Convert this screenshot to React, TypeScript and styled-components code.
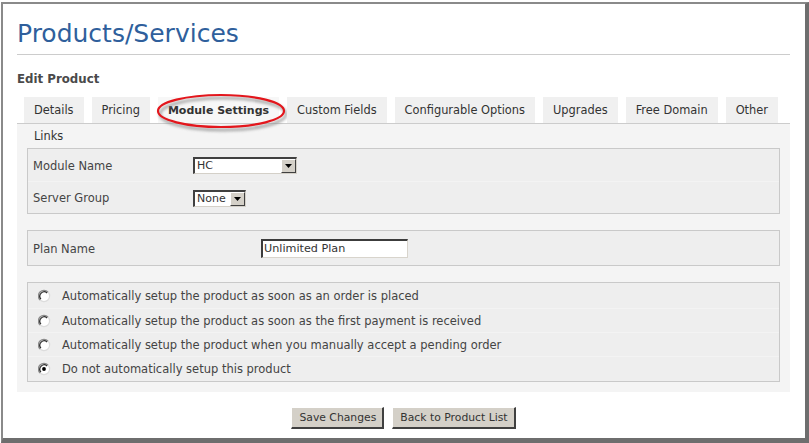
import React from "react";
import styled, { createGlobalStyle, css } from "styled-components";

const GlobalStyle = createGlobalStyle`
  html, body { margin: 0; padding: 0; background: #ffffff; }
  body { font-family: "DejaVu Sans", Verdana, sans-serif; }
  * { box-sizing: border-box; }
`;

const Frame = styled.div`
  margin: 2px 0 0 1px;
  width: 808px;
  height: 441px;
  border-style: solid;
  border-color: #8a8a8a #6e6e6e #6e6e6e #8a8a8a;
  border-width: 2px 4px 5px 2px;
  background: #ffffff;
  padding: 14px 15px 0 14px;
  display: flex;
  flex-direction: column;
`;

const Title = styled.h1`
  margin: 0;
  font-family: "DejaVu Sans", Verdana, sans-serif;
  font-weight: normal;
  font-size: 25px;
  line-height: 31px;
  color: #2f5f9c;
`;

const Rule = styled.hr`
  margin: 5px 0 0 0;
  border: 0;
  border-top: 1px solid #cccccc;
  height: 0;
`;

const SubHeading = styled.h2`
  margin: 16px 0 0 0;
  font-size: 11.8px;
  line-height: 16px;
  font-weight: bold;
  color: #4a4a4a;
`;

const TabRow = styled.div<{ $inner?: boolean }>`
  display: flex;
  gap: 8px;
  padding-left: 7px;
  ${(p) =>
    p.$inner
      ? css`
          height: 24px;
          margin-left: -10px;
        `
      : css`
          margin-top: 10px;
          border-bottom: 1px solid #cccccc;
        `}
`;

const Tab = styled.div<{ $active?: boolean; $plain?: boolean }>`
  position: relative;
  height: ${(p) => (p.$plain ? "24px" : "26px")};
  padding: 0 10px;
  display: flex;
  align-items: center;
  font-size: ${(p) => (p.$active ? "11px" : "11.4px")};
  color: #333333;
  white-space: nowrap;
  background: ${(p) => (p.$plain ? "transparent" : p.$active ? "#f7f7f7" : "#f0f0f0")};
  font-weight: ${(p) => (p.$active ? "bold" : "normal")};
`;

const Highlight = styled.svg`
  position: absolute;
  left: -6px;
  top: -7px;
  width: 140px;
  height: 44px;
  overflow: visible;
  pointer-events: none;
`;

const Panel = styled.div`
  background: #f4f4f4;
  padding: 0 10px 10px 10px;
  display: flex;
  flex-direction: column;
`;

const Box = styled.div<{ $gap: number; $pad?: number }>`
  margin-top: ${(p) => p.$gap}px;
  padding: ${(p) => p.$pad ?? 0}px 0;
  border: 1px solid #c9c9c9;
  background: #eeeeee;
  display: flex;
  flex-direction: column;
`;

const FieldRow = styled.div<{ $h?: number }>`
  height: ${(p) => p.$h ?? 32}px;
  display: flex;
  align-items: center;
  padding-top: 1px;
  & + & {
    border-top: 1px solid #f3f3f3;
  }
`;

const Label = styled.div<{ $width: number }>`
  width: ${(p) => p.$width}px;
  padding-left: 5px;
  font-size: 11.5px;
  color: #444444;
  flex-shrink: 0;
`;

const SelectBox = styled.div<{ $width: number }>`
  width: ${(p) => p.$width}px;
  height: 17px;
  display: flex;
  align-items: stretch;
  background: #ffffff;
  border-style: solid;
  border-width: 2px 1px 1px 2px;
  border-color: #404040 #d4d0c8 #d4d0c8 #404040;
`;

const SelectValue = styled.div`
  flex: 1;
  font-size: 11px;
  line-height: 14px;
  color: #333333;
  padding-left: 2px;
`;

const SelectButton = styled.div`
  width: 15px;
  background: #d4d0c8;
  border-style: solid;
  border-width: 1px;
  border-color: #ffffff #404040 #404040 #ffffff;
  display: flex;
  align-items: center;
  justify-content: center;
`;

const TextInput = styled.div`
  width: 147px;
  height: 19px;
  background: #ffffff;
  border-style: solid;
  border-width: 2px 1px 1px 2px;
  border-color: #3c3c3c #d8d4cc #d8d4cc #3c3c3c;
  font-size: 11.2px;
  line-height: 15px;
  color: #333333;
  padding-left: 1px;
`;

const RadioRow = styled.div`
  height: 24px;
  display: flex;
  align-items: center;
  padding-left: 10px;
  gap: 6px;
  font-size: 11.5px;
  color: #444444;
  & + & {
    border-top: 1px solid #f3f3f3;
  }
`;

const RadioIcon = styled.svg`
  width: 18px;
  height: 14px;
  flex-shrink: 0;
`;

const Actions = styled.div`
  display: flex;
  justify-content: center;
  gap: 8px;
  margin-top: 15px;
`;

const Button = styled.button`
  height: 22px;
  padding: 0 6px 0 7px;
  background: #d4d0c8;
  border-style: solid;
  border-width: 1px 2px 2px 1px;
  border-color: #ffffff #404040 #404040 #ffffff;
  font-family: "DejaVu Sans", Verdana, sans-serif;
  font-size: 10.8px;
  color: #333333;
  cursor: pointer;
`;

const tabs = [
  "Details",
  "Pricing",
  "Module Settings",
  "Custom Fields",
  "Configurable Options",
  "Upgrades",
  "Free Domain",
  "Other",
];

const Arrow = () => (
  <svg width="7" height="4" viewBox="0 0 7 4">
    <path d="M0 0h7L3.5 4z" fill="#000" />
  </svg>
);

const Select = ({ width, value }: { width: number; value: string }) => (
  <SelectBox $width={width}>
    <SelectValue>{value}</SelectValue>
    <SelectButton>
      <Arrow />
    </SelectButton>
  </SelectBox>
);

const Radio = ({ checked }: { checked?: boolean }) => (
  <RadioIcon viewBox="0 0 18 14">
    <circle cx="6" cy="7" r="5.6" fill="#ffffff" />
    <path d="M9.96 3.04 A5.6 5.6 0 0 1 2.04 10.96" stroke="#dcdcdc" strokeWidth="1.2" fill="none" />
    <path d="M2.04 10.96 A5.6 5.6 0 0 1 9.96 3.04" stroke="#8c8c8c" strokeWidth="1.4" fill="none" />
    <path d="M2.9 10.1 A4.4 4.4 0 0 1 9.1 3.9" stroke="#303030" strokeWidth="1.3" fill="none" />
    {checked && <circle cx="6" cy="7" r="1.9" fill="#000" />}
  </RadioIcon>
);

const radios = [
  "Automatically setup the product as soon as an order is placed",
  "Automatically setup the product as soon as the first payment is received",
  "Automatically setup the product when you manually accept a pending order",
  "Do not automatically setup this product",
];

export default function App() {
  return (
    <>
      <GlobalStyle />
      <Frame>
        <Title>Products/Services</Title>
        <Rule />
        <SubHeading>Edit Product</SubHeading>
        <TabRow>
          {tabs.map((t) => (
            <Tab key={t} $active={t === "Module Settings"}>
              {t}
              {t === "Module Settings" && (
                <Highlight viewBox="0 0 140 44">
                  <defs>
                    <filter id="blur" x="-20%" y="-40%" width="140%" height="180%">
                      <feGaussianBlur stdDeviation="1.4" />
                    </filter>
                  </defs>
                  <ellipse
                    cx="71"
                    cy="24"
                    rx="63"
                    ry="16"
                    fill="none"
                    stroke="#8a8a8a"
                    strokeWidth="2.5"
                    filter="url(#blur)"
                    opacity="0.8"
                  />
                  <ellipse cx="69" cy="21" rx="63" ry="16" fill="none" stroke="#e3161c" strokeWidth="2.2" />
                </Highlight>
              )}
            </Tab>
          ))}
        </TabRow>
        <Panel>
          <TabRow $inner>
            <Tab $plain>Links</Tab>
          </TabRow>
          <Box $gap={0}>
            <FieldRow>
              <Label $width={165}>Module Name</Label>
              <Select width={104} value="HC" />
            </FieldRow>
            <FieldRow>
              <Label $width={165}>Server Group</Label>
              <Select width={53} value="None" />
            </FieldRow>
          </Box>
          <Box $gap={16}>
            <FieldRow $h={34}>
              <Label $width={233}>Plan Name</Label>
              <TextInput>Unlimited Plan</TextInput>
            </FieldRow>
          </Box>
          <Box $gap={16} $pad={1}>
            {radios.map((r, i) => (
              <RadioRow key={r}>
                <Radio checked={i === 3} />
                {r}
              </RadioRow>
            ))}
          </Box>
        </Panel>
        <Actions>
          <Button>Save Changes</Button>
          <Button>Back to Product List</Button>
        </Actions>
      </Frame>
    </>
  );
}
